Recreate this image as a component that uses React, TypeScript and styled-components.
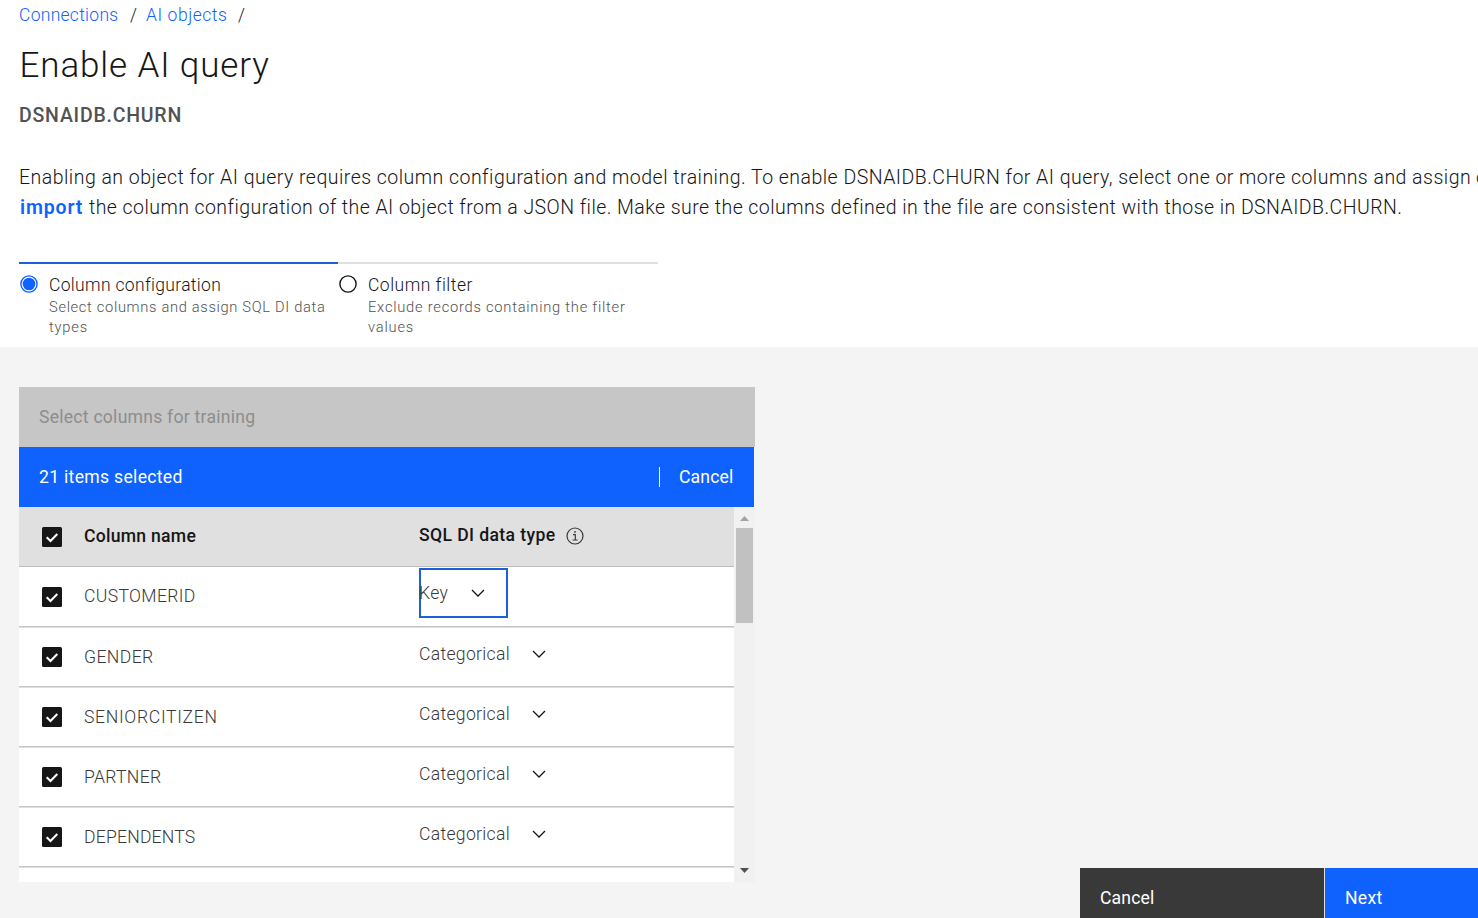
import React from "react";
import styled, { createGlobalStyle } from "styled-components";

const GlobalStyle = createGlobalStyle`
  *, *::before, *::after { box-sizing: border-box; }
  html, body { margin: 0; height: 100%; overflow: hidden; }
  body { font-family: Roboto, "Liberation Sans", sans-serif; font-weight: 300; color: #161616; background: #f4f4f4; }
  button { font: inherit; border: 0; background: none; padding: 0; color: inherit; text-align: left; }
`;

const Page = styled.div`
  display: flex;
  flex-direction: column;
  height: 918px;
  width: 1478px;
  overflow: hidden;
`;

const Label = styled.span<{ $track?: number }>`
  display: inline-block;
  white-space: nowrap;
  letter-spacing: ${(p) => p.$track ?? 0}px;
`;

const Header = styled.header`
  flex: none;
  height: 347px;
  padding-left: 19px;
  background: #fff;
`;

const Breadcrumb = styled.nav`
  display: flex;
  height: 30px;
  line-height: 30px;
  font-size: 17.5px;
`;

const Crumb = styled.a<{ $width: number }>`
  width: ${(p) => p.$width}px;
  color: #0f62fe;
`;

const Slash = styled.span<{ $width: number }>`
  width: ${(p) => p.$width}px;
`;

const Title = styled.h1`
  margin: 11px 0 0 0.5px;
  font-size: 35px;
  line-height: 50px;
  font-weight: 300;
`;

const ObjectName = styled.h2`
  margin: 10px 0 0;
  font-size: 19.5px;
  line-height: 30px;
  font-weight: 500;
  color: #525252;
`;

const Intro = styled.div`
  margin-top: 32px;
  font-size: 19.5px;
  line-height: 30px;
`;

const IntroLine = styled.div`
  display: flex;
  white-space: nowrap;
`;

const ImportLink = styled.a`
  width: 70px;
  padding-left: 1px;
  font-weight: 600;
  color: #0f62fe;
`;

const Steps = styled.div`
  display: flex;
  margin-top: 39px;
`;

const Step = styled.div<{ $active?: boolean; $width: number }>`
  display: flex;
  width: ${(p) => p.$width}px;
  height: 85px;
  padding-top: 10px;
  border-top: 2px solid ${(p) => (p.$active ? "#1b61d8" : "#e0e0e0")};
`;

const StepIcon = styled.svg`
  flex: none;
  width: 20px;
  height: 20px;
  margin-right: 10px;
`;

const StepTitle = styled.div`
  font-size: 17.5px;
  line-height: 22px;
`;

const StepHint = styled.div`
  padding-top: 1px;
  font-size: 14.7px;
  line-height: 20px;
  color: #525252;
`;

const Body = styled.main`
  position: relative;
  flex: 1;
  padding: 40px 0 0 19px;
`;

const Table = styled.section`
  width: 736px;
  font-size: 17.6px;
`;

const Toolbar = styled.div`
  height: 60px;
  padding-left: 20px;
  line-height: 60px;
  background: #c6c6c6;
  color: #8d8d8d;
  font-weight: 400;
`;

const BatchBar = styled.div`
  display: flex;
  align-items: center;
  width: 735px;
  height: 60px;
  padding-left: 20px;
  background: #0f62fe;
  color: #fff;
  font-weight: 400;
`;

const BatchCount = styled.div`
  flex: 1;
`;

const BatchCancel = styled.button`
  width: 95px;
  height: 20px;
  line-height: 20px;
  padding-left: 19px;
  border-left: 1px solid #fff;
`;

const Scroller = styled.div`
  display: flex;
  height: 375px;
`;

const Rows = styled.div`
  width: 715px;
  height: 375px;
  overflow: hidden;
  background: #fff;
`;

const Row = styled.div<{ $head?: boolean; $underHead?: boolean }>`
  display: flex;
  height: 60px;
  padding-left: 23px;
  border-bottom: 1px solid ${(p) => (p.$head ? "#bebebe" : "#c6c6c6")};
  background: ${(p) => (p.$head ? "#e0e0e0" : "#fff")};
  box-shadow: ${(p) => (p.$head || p.$underHead ? "none" : "inset 0 1px 0 #dedede")};
  color: ${(p) => (p.$head ? "#161616" : "#393939")};
  font-weight: ${(p) => (p.$head ? 500 : 300)};
`;

const CheckIcon = styled.svg`
  flex: none;
  width: 20px;
  height: 20px;
  margin-top: 20px;
`;

const NameCell = styled.div<{ $offset: number }>`
  width: 335px;
  margin-left: 22px;
  padding-top: ${(p) => p.$offset}px;
  line-height: 22px;
`;

const HeadCell = styled.div`
  display: flex;
  height: 22px;
  margin-top: 17px;
  line-height: 22px;
`;

const HeadLabel = styled.div`
  width: 147px;
`;

const InfoIcon = styled.svg`
  width: 18px;
  height: 18px;
  margin-top: 3px;
`;

const Select = styled.button<{ $focused?: boolean }>`
  display: flex;
  align-items: center;
  height: 50px;
  width: ${(p) => (p.$focused ? 89 : 150)}px;
  margin-top: ${(p) => (p.$focused ? 1 : 2)}px;
  box-shadow: ${(p) => (p.$focused ? "inset 0 0 0 2px #1b61d8" : "none")};
`;

const SelectValue = styled.span<{ $width: number }>`
  width: ${(p) => p.$width}px;
`;

const Scrollbar = styled.div`
  display: flex;
  flex-direction: column;
  justify-content: space-between;
  align-items: center;
  width: 21px;
  background: #f1f1f1;
`;

const Arrow = styled.svg`
  display: block;
  width: 9px;
  height: 5px;
`;

const ScrollTop = styled.div`
  display: flex;
  flex-direction: column;
  align-items: center;
  gap: 7px;
  padding-top: 9px;
`;

const Thumb = styled.div`
  width: 17px;
  height: 95px;
  background: #c1c1c1;
`;

const ScrollBottom = styled.div`
  padding-bottom: 9px;
`;

const Actions = styled.footer`
  position: absolute;
  right: 0;
  bottom: 0;
  display: flex;
  width: 398px;
  height: 50px;
  font-size: 17.6px;
  font-weight: 400;
  color: #fff;
`;

const Action = styled.button<{ $primary?: boolean }>`
  width: ${(p) => (p.$primary ? 154 : 244)}px;
  padding: 9px 0 0 20px;
  background: ${(p) => (p.$primary ? "#0f62fe" : "#393939")};
  border-left: ${(p) => (p.$primary ? "1px solid #e0e0e0" : "0")};
`;

const Check = () => (
  <CheckIcon viewBox="0 0 20 20">
    <rect width="20" height="20" rx="1.5" fill="#161616" />
    <path d="M4.7 10.3 8.5 14 15.3 7" fill="none" stroke="#fff" strokeWidth="2.1" />
  </CheckIcon>
);

const Chevron = () => (
  <svg width="14" height="8" viewBox="0 0 14 8">
    <path d="M1 1 7 7 13 1" fill="none" stroke="#161616" strokeWidth="1.3" />
  </svg>
);

const Radio = ({ on }: { on?: boolean }) => (
  <StepIcon viewBox="0 0 20 20">
    <circle cx="10" cy="10" r="8.1" fill="none" stroke={on ? "#0f62fe" : "#161616"} strokeWidth="1.4" />
    {on && <circle cx="10" cy="10" r="6.3" fill="#0f62fe" />}
  </StepIcon>
);

type Column = { name: string; track: number; type: string };

const columns: Column[] = [
  { name: "CUSTOMERID", track: 0.35, type: "Key" },
  { name: "GENDER", track: 0.4, type: "Categorical" },
  { name: "SENIORCITIZEN", track: 0.68, type: "Categorical" },
  { name: "PARTNER", track: 0.3, type: "Categorical" },
  { name: "DEPENDENTS", track: 0.2, type: "Categorical" },
  { name: "", track: 0, type: "" },
];

const ColumnRow = ({ column, first }: { column: Column; first: boolean }) => (
  <Row $underHead={first}>
    {column.name && (
      <>
        <Check />
        <NameCell $offset={first ? 18 : 19}>
          <Label $track={column.track}>{column.name}</Label>
        </NameCell>
        <Select $focused={first}>
          <SelectValue $width={first ? 52 : 113}>
            <Label $track={0.3}>{column.type}</Label>
          </SelectValue>
          <Chevron />
        </Select>
      </>
    )}
  </Row>
);

export default function App() {
  return (
    <Page>
      <GlobalStyle />
      <Header>
        <Breadcrumb>
          <Crumb $width={111}><Label $track={0.28}>Connections</Label></Crumb>
          <Slash $width={16}>/</Slash>
          <Crumb $width={92}><Label $track={0.55}>AI objects</Label></Crumb>
          <Slash $width={10}>/</Slash>
        </Breadcrumb>
        <Title><Label $track={0.87}>Enable AI query</Label></Title>
        <ObjectName><Label $track={0.78}>DSNAIDB.CHURN</Label></ObjectName>
        <Intro>
          <IntroLine>
            <Label $track={0.476}>
              Enabling an object for AI query requires column configuration and model training. To enable DSNAIDB.CHURN for AI query, select one or more columns and assign
            </Label>
            <Label>&nbsp;one</Label>
          </IntroLine>
          <IntroLine>
            <ImportLink><Label $track={0.85}>import</Label></ImportLink>
            <Label $track={0.438}>
              the column configuration of the AI object from a JSON file. Make sure the columns defined in the file are consistent with those in DSNAIDB.CHURN.
            </Label>
          </IntroLine>
        </Intro>
        <Steps>
          <Step $active $width={319}>
            <Radio on />
            <div>
              <StepTitle><Label $track={0.33}>Column configuration</Label></StepTitle>
              <StepHint>
                <Label $track={0.67}>Select columns and assign SQL DI data</Label>
                <br />
                <Label $track={0.8}>types</Label>
              </StepHint>
            </div>
          </Step>
          <Step $width={320}>
            <Radio />
            <div>
              <StepTitle><Label $track={0.5}>Column filter</Label></StepTitle>
              <StepHint>
                <Label $track={0.76}>Exclude records containing the filter</Label>
                <br />
                <Label $track={0.8}>values</Label>
              </StepHint>
            </div>
          </Step>
        </Steps>
      </Header>
      <Body>
        <Table>
          <Toolbar><Label $track={0.24}>Select columns for training</Label></Toolbar>
          <BatchBar>
            <BatchCount><Label $track={0.3}>21 items selected</Label></BatchCount>
            <BatchCancel><Label $track={0.15}>Cancel</Label></BatchCancel>
          </BatchBar>
          <Scroller>
            <Rows>
              <Row $head>
                <Check />
                <NameCell $offset={18}><Label $track={0.26}>Column name</Label></NameCell>
                <HeadCell>
                  <HeadLabel><Label $track={0.38}>SQL DI data type</Label></HeadLabel>
                  <InfoIcon viewBox="0 0 18 18">
                    <circle cx="9" cy="9" r="8" fill="none" stroke="#393939" strokeWidth="1.2" />
                    <path d="M7 7.7H9.3V13M6.6 13H11.6" fill="none" stroke="#393939" strokeWidth="1.2" />
                    <circle cx="9" cy="4.9" r="0.9" fill="#393939" />
                  </InfoIcon>
                </HeadCell>
              </Row>
              {columns.map((column, i) => (
                <ColumnRow key={i} column={column} first={i === 0} />
              ))}
            </Rows>
            <Scrollbar>
              <ScrollTop>
                <Arrow viewBox="0 0 9 5"><path d="M0 5 4.5 0 9 5Z" fill="#a3a3a3" /></Arrow>
                <Thumb />
              </ScrollTop>
              <ScrollBottom>
                <Arrow viewBox="0 0 9 5"><path d="M0 0 4.5 5 9 0Z" fill="#505050" /></Arrow>
              </ScrollBottom>
            </Scrollbar>
          </Scroller>
        </Table>
        <Actions>
          <Action><Label $track={0.15}>Cancel</Label></Action>
          <Action $primary><Label $track={0.3}>Next</Label></Action>
        </Actions>
      </Body>
    </Page>
  );
}
